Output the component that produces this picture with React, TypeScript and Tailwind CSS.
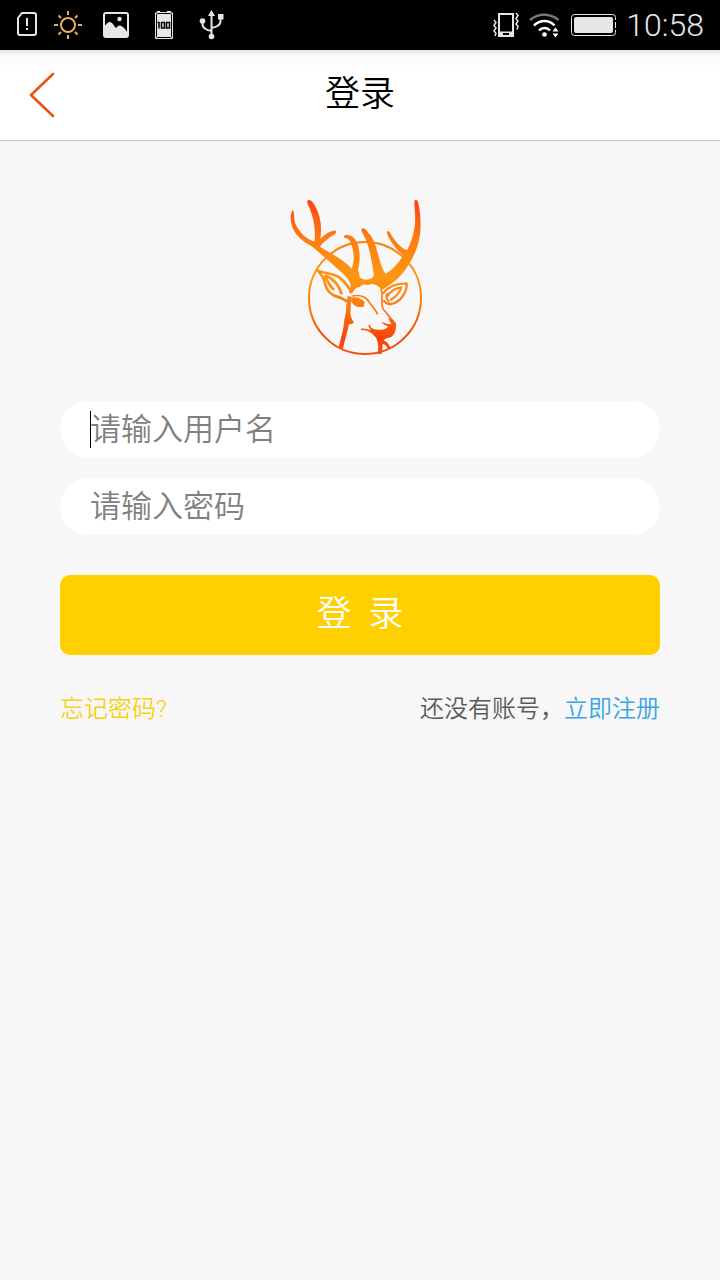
import { useState } from "react";

const StatusBar = () => {
    return (
        <div className="flex h-[50px] items-center justify-between bg-black pr-4 text-[#e6e6e6]">
            <div className="flex">
                {/* SIM */}
                <svg className="h-[50px] w-11" viewBox="0 0 44 50" fill="none" stroke="currentColor" strokeWidth={2}>
                    <path d="M22 13h12a2 2 0 0 1 2 2v18a2 2 0 0 1-2 2H20a2 2 0 0 1-2-2V18z" />
                    <path d="M27 18v8M27 28v2" />
                </svg>
                {/* Brillo */}
                <svg className="h-[50px] w-12" viewBox="44 0 48 50" fill="none" stroke="#e9ad5c" strokeWidth={2}>
                    <circle cx="68" cy="25" r="7" />
                    <path d="M68 11v4M68 35v4M54 25h4M78 25h4M58.5 15.5l2.5 2.5M75 32l2.5 2.5M58.5 34.5L61 32M75 18l2.5-2.5" />
                </svg>
                {/* Imagen */}
                <svg className="h-[50px] w-12" viewBox="92 0 48 50">
                    <rect x="104" y="13" width="24" height="24" rx="2" fill="none" stroke="currentColor" strokeWidth={2} />
                    <path d="M104 27c2-3 4-5 6-5s4 4 6 6c2-2 3-3 5-2s4 2 6 6v5h-23z" fill="currentColor" />
                    <circle cx="119.5" cy="19" r="2.2" fill="currentColor" />
                </svg>
                {/* Carga completa */}
                <svg className="h-[50px] w-12" viewBox="140 0 48 50">
                    <path d="M157 11h3v1h7v-1h4v1.5h2V38l-1 1h-16l-1-1V12.500h2z" fill="currentColor" />
                    <rect x="156.5" y="13.5" width="15" height="24" rx="1" fill="none" stroke="#000" />
                    <g fill="none" stroke="#000" strokeWidth={1.5}>
                        <path d="M157.5 22.5h1.500v6" />
                        <rect x="161.500" y="22.5" width="3" height="5.5" />
                        <rect x="166.500" y="22.5" width="3" height="5.5" />
                    </g>
                </svg>
                {/* USB */}
                <svg className="h-[50px] w-12" viewBox="188 0 48 50" fill="none" stroke="currentColor" strokeWidth={2}>
                    <path d="M211.5 14v22M202.5 22v2c0 4 3 6 9 7M220.5 18v3c0 4-3 6-9 7" />
                    <path d="M211.5 10l3.5 6h-7z" fill="currentColor" stroke="none" />
                    <circle cx="202.5" cy="21" r="2.8" fill="currentColor" stroke="none" />
                    <circle cx="211.5" cy="36.5" r="2.8" fill="currentColor" stroke="none" />
                    <path d="M218 14h5.5v5.5H218z" fill="currentColor" stroke="none" />
                </svg>
            </div>
            <div className="flex items-center gap-[10px]">
                {/* Vibrar */}
                <svg className="h-[50px] w-[26px]" viewBox="493 0 26 50" fill="none" stroke="currentColor">
                    <path d="M499 14h14v22h-14z" strokeWidth={2} />
                    <path d="M498 31.5h16v5h-16z" fill="currentColor" stroke="none" />
                    <path d="M503 33h6v2h-6z" fill="#000" stroke="none" />
                    <path d="M494 20l2 2.5-2 3 2 2.5-2 3 2 2.5-1 2.5M516 13l2 2.5-2 3 2 2.5-2 3 2 2.5-1 3" strokeWidth={1.5} />
                </svg>
                {/* Wifi */}
                <svg className="h-[50px] w-8" viewBox="529 0 32 50" fill="none" strokeWidth={2.5}>
                    <path d="M530 20c8-7 20-7 28.5 0" stroke="#777" />
                    <path d="M534 25.5c6-6 15-6 20.5 0M539 30.5c3-3.5 8-3.5 11 0" stroke="#fff" />
                    <circle cx="544.5" cy="34.5" r="2.3" fill="#fff" />
                    <path d="M552.5 31.5l3-4 3 4zM552.5 33.5l3 4 3-4z" fill="#fff" />
                </svg>
                {/* Batería */}
                <svg className="h-[50px] w-[45px]" viewBox="571 0 45 50">
                    <rect x="571.5" y="14.5" width="44" height="21" rx="3" fill="none" stroke="currentColor" />
                    <rect x="574" y="17" width="39" height="16" rx="2" fill="currentColor" />
                    <path d="M615 20v10" stroke="#000" strokeDasharray="2 6" strokeWidth={2} />
                </svg>
                <span className="font-['Roboto',sans-serif] text-[32px] leading-[50px] font-light">10:58</span>
            </div>
        </div>
    );
};

const DeerLogo = () => {
    return (
        <svg className="mx-auto h-[170px] w-40" viewBox="0 0 480 510" fill="none" role="img" aria-label="logo">
            <defs>
                <linearGradient id="deer" gradientUnits="userSpaceOnUse" x1="0" y1="30" x2="0" y2="492">
                    <stop offset="0" stopColor="#fc4315" />
                    <stop offset="0.25" stopColor="#fd7d12" />
                    <stop offset="0.5" stopColor="#fd9712" />
                    <stop offset="0.72" stopColor="#f97410" />
                    <stop offset="0.9" stopColor="#f84308" />
                    <stop offset="1" stopColor="#f55418" />
                </linearGradient>
            </defs>

            <circle cx="255" cy="324" r="168" stroke="url(#deer)" strokeWidth={6} />

            <g fill="url(#deer)">
                {/* Cuerno izquierdo */}
                <path d="M41 66C43 61 37 59 35 65C29 82 31 108 48 132C64 151 82 162 97 170C122 191 147 214 172 236C190 251 204 263 212 282L232 284C240 270 240 250 234 240C241 216 241 187 233 163C226 144 213 132 195 136C189 139 192 145 199 145C211 147 219 170 221 195C222 213 219 226 215 236C190 209 149 188 120 170C130 157 145 144 164 133C171 128 169 120 161 122C145 125 132 136 121 146C127 112 122 78 104 45C96 34 90 28 84 31C79 35 83 42 87 50C101 83 108 119 103 155C82 149 58 129 47 103C41 88 43 77 41 66Z" />
                {/* Cuerno derecho */}
                <path d="M248 115C242 117 244 123 248 130C263 155 271 190 277 225C280 245 284 258 280 270L310 297C333 282 350 272 366 252C392 220 413 181 420 135C424 101 421 62 414 35C411 28 403 29 403 35C403 56 407 78 405 101C402 130 394 157 381 181C360 171 344 153 330 128C326 121 319 124 321 130C332 158 350 181 370 196C353 222 337 240 318 251C310 247 305 228 299 211C291 183 287 154 266 130C260 122 255 114 248 115Z" />
                {/* Base de los cuernos */}
                <path d="M208 260L234 238C230 254 238 263 250 268C264 272 278 266 282 256L300 240C308 251 315 254 325 248L350 262C332 280 320 288 308 299L296 290C284 280 276 280 264 285C254 283 247 282 238 292C226 289 224 302 214 311L206 306C215 292 214 280 204 266Z" />
                {/* Ojo */}
                <path d="M216 323C228 319 246 324 256 339L250 341C258 350 249 352 234 350C222 349 218 339 212 333Z" />
                {/* Hocico */}
                <path d="M305 395C315 398 322 405 334 401C330 397 326 390 325 384C337 389 347 395 349 404C346 412 350 421 340 434C334 445 320 441 313 449C305 460 309 478 305 492L293 492C296 470 295 452 286 441C279 431 271 426 262 422C280 413 294 423 312 418C322 415 325 410 322 408C315 407 308 402 305 395Z" />
                {/* Cuello */}
                <path d="M203 318L216 321C211 331 213 346 212 362C209 377 217 388 222 399C216 400 212 405 207 402C203 425 194 450 189 476L176 472C183 444 191 416 192 395C195 376 200 365 198 347C203 339 201 327 203 318Z" />
                <path d="M307 451C319 452 326 461 333 476L324 477C319 467 313 460 306 461Z" />
            </g>

            <g stroke="url(#deer)" strokeLinecap="round" strokeLinejoin="round">
                {/* Orejas */}
                <path d="M113 242C130 250 158 249 178 262C200 277 199 290 214 302M113 242C125 254 132 263 135 281C140 304 157 317 178 322C190 325 194 334 207 334" strokeWidth={8} />
                <path d="M138 258C159 264 177 285 184 310M134 260C146 275 149 290 160 297" strokeWidth={8} />
                <path d="M310 309C325 289 350 280 380 280C382 303 365 330 344 339C331 345 317 341 312 333" strokeWidth={7} />
                <path d="M321 320C333 300 348 296 364 292C359 313 344 322 333 329M322 311C317 317 318 325 326 334" strokeWidth={6} />
                {/* Frente y cara */}
                <path d="M303 297C310 319 302 338 309 357C319 367 326 379 340 394" strokeWidth={5} />
                <path d="M218 318C239 313 260 321 268 337C276 350 286 358 292 371" strokeWidth={5} />
                <path d="M245 418C256 417 266 421 275 425M268 407C268 415 275 417 281 420" strokeWidth={5} />
            </g>
        </svg>
    );
};

const App = () => {

    const [username, setUsername] = useState("");
    const [password, setPassword] = useState("");

    return (
        <div className="min-h-screen bg-[#f7f7f7] font-['Roboto','Noto_Sans_CJK_SC',sans-serif]">
            <StatusBar />

            <header className="grid grid-cols-[1fr_auto_1fr] items-center border-b border-[#c8c8c8] bg-white bg-linear-to-b from-[#e4e4e4] via-[#fafafa] via-6% to-white to-20%">
                <button type="button" aria-label="返回" className="flex h-[90px] w-20 items-center pl-[28px]">
                    <svg className="h-12 w-7" viewBox="0 0 28 48" fill="none" stroke="#ea5514" strokeWidth={2.6} strokeLinecap="round" strokeLinejoin="round">
                        <path d="M25 3L3 24L25 45" />
                    </svg>
                </button>
                <h1 className="text-[35px] leading-[50px] font-[350] text-black">登录</h1>
            </header>

            <main className="px-[60px] pt-[49px]">
                <DeerLogo />

                <form className="mt-[41px]" onSubmit={(e) => e.preventDefault()}>
                    <div className="space-y-5">
                        <div className="relative">
                            <input
                                type="text"
                                aria-label="用户名"
                                className="block h-[57px] w-full rounded-full bg-white px-[30px] text-[31px] font-[350] text-gray-800 outline-none placeholder:text-[#808080]"
                                placeholder="请输入用户名"
                                value={username}
                                onChange={(e) => setUsername(e.target.value)}
                            />
                            {
                                !username && <span className="pointer-events-none absolute top-[10px] left-[30px] h-[37px] w-px bg-black"></span>
                            }
                        </div>
                        <input
                            type="password"
                            aria-label="密码"
                            className="block h-[57px] w-full rounded-full bg-white px-[30px] text-[31px] font-[350] text-gray-800 outline-none placeholder:text-[#808080]"
                            placeholder="请输入密码"
                            value={password}
                            onChange={(e) => setPassword(e.target.value)}
                        />
                    </div>
                    <button type="submit" className="mt-10 h-20 w-full rounded-[10px] bg-[#ffd000] text-[35px] font-[350] text-white">
                        登&nbsp;&nbsp;录
                    </button>
                </form>

                <div className="mt-9 flex justify-between text-[24px] leading-9 font-[350]">
                    <a href="#" className="text-[#fad014]">忘记密码?</a>
                    <p className="text-[#5a5a5a]">
                        还没有账号，<a href="#" className="text-[#3ba4e6]">立即注册</a>
                    </p>
                </div>
            </main>
        </div>
    );
};

export default App;
